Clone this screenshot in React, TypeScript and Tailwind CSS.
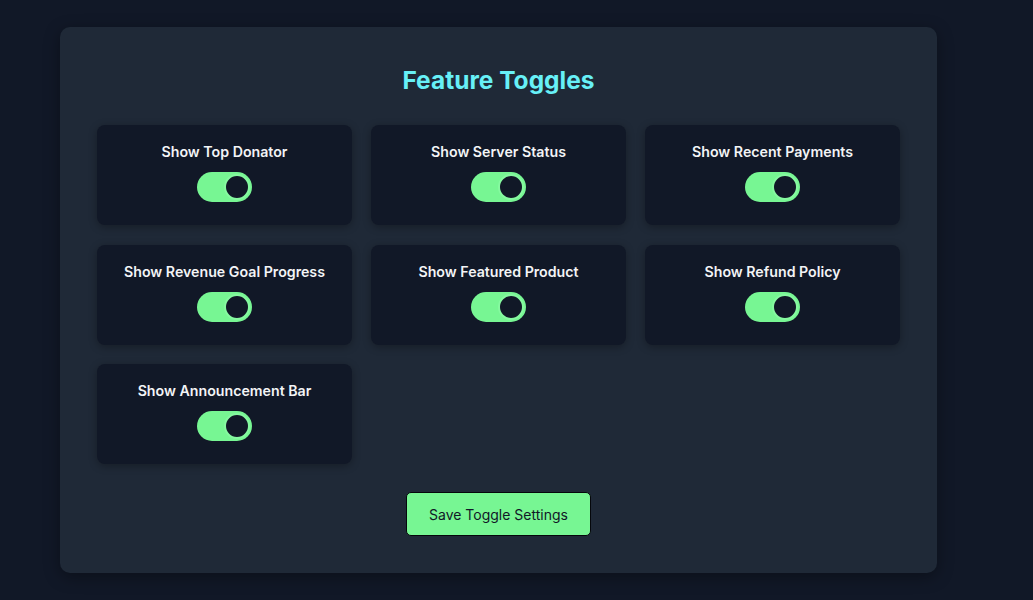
const toggles = [
  "Show Top Donator",
  "Show Server Status",
  "Show Recent Payments",
  "Show Revenue Goal Progress",
  "Show Featured Product",
  "Show Refund Policy",
  "Show Announcement Bar",
];

function Toggle() {
  return (
    <div className="relative w-[55px] h-[30px] rounded-full bg-[#77f693]">
      <div className="absolute right-[2px] top-[2px] w-[26px] h-[26px] rounded-full bg-[#111827] border-[2px] border-[#86f9a0]" />
    </div>
  );
}

export default function App() {
  return (
    <div className="min-h-[600px] bg-[#111827] pt-[27px] pl-[60px] font-['Inter','Liberation_Sans',sans-serif]">
      <div className="w-[877px] h-[546px] rounded-[10px] bg-[#1f2937] shadow-[0_4px_16px_rgba(0,0,0,0.35)] px-[37px] pt-[35px]">
        <h1 className="text-center text-[24.5px] leading-[36px] font-bold text-[#67f0f7]">
          Feature Toggles
        </h1>

        <div className="grid grid-cols-3 gap-x-[19px] gap-y-[19.5px] mt-[27px]">
          {toggles.map((label) => (
            <div
              key={label}
              className="h-[100px] rounded-[8px] bg-[#111827] shadow-[0_2px_8px_rgba(0,0,0,0.3)] flex flex-col items-center pt-[17px]"
            >
              <div className="text-[14.2px] leading-[20px] font-semibold text-[#f3f4f6]">{label}</div>
              <div className="mt-[10px]">
                <Toggle />
              </div>
            </div>
          ))}
        </div>

        <div className="flex justify-center mt-[28px]">
          <button className="w-[185px] h-[44px] rounded-[5px] bg-[#77f693] border-[1.5px] border-[#05070b] text-[14px] text-[#111827]">
            Save Toggle Settings
          </button>
        </div>
      </div>
    </div>
  );
}
